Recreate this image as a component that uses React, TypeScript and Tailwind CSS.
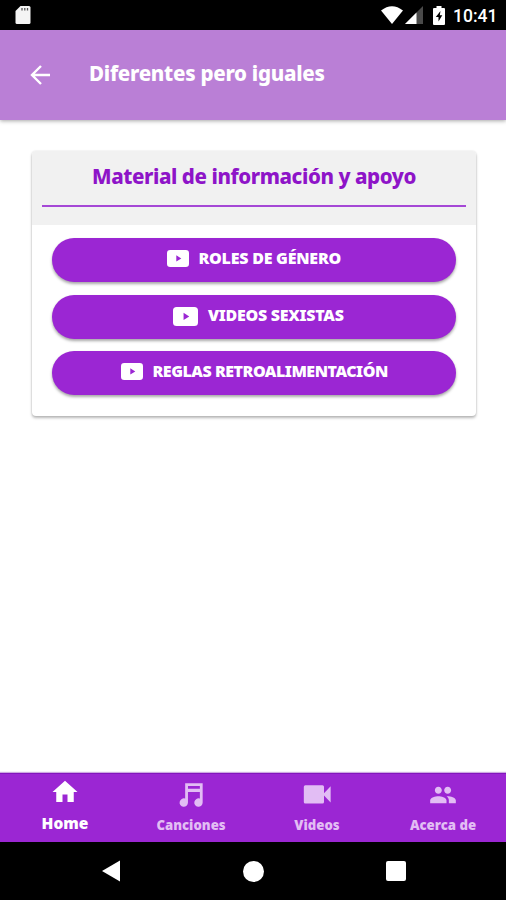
import { ReactNode } from "react";

function PlayIcon({ className }: { className: string }) {
  return (
    <svg viewBox="0 0 22 17" preserveAspectRatio="none" className={className}>
      <path
        fill="currentColor"
        fillRule="evenodd"
        d="M3.2 0h15.6Q22 0 22 3.2v10.6q0 3.2-3.2 3.2H3.2Q0 17 0 13.800V3.200Q0 0 3.200 0zM9.300 5.200v6.400l5-3.200z"
      />
    </svg>
  );
}

function StatusBar() {
  return (
    <div className="flex h-[30px] w-full items-center bg-black text-white">
      <svg viewBox="0 0 16 20" className="ml-[15px] h-5 w-4">
        <path fill="#f4f4f4" d="M5.500 1H14q1.500 0 1.500 1.500v15q0 1.500-1.500 1.500H2q-1.500 0-1.500-1.500V6z" />
        <path stroke="#555" strokeWidth="1.300" d="M7 3v2.500M9.800 3v2.500M12.500 3v2.500" />
      </svg>
      <svg viewBox="0 0 22 18" className="ml-auto h-[18px] w-[22px]">
        <path fill="#fff" d="M0 4.500Q11-4 22 4.500L11 18z" />
      </svg>
      <svg viewBox="0 0 18 18" className="ml-0.5 h-[18px] w-[18px]">
        <path fill="#4a4a4a" d="M18 0v18H0z" />
        <path fill="#fff" d="M11.500 6.500V18H0z" />
      </svg>
      <svg viewBox="0 0 12 19" className="ml-2.5 h-[19px] w-3">
        <path fill="#fff" d="M3.500 0h5v2H11q1 0 1 1v15q0 1-1 1H1q-1 0-1-1V3q0-1 1-1h2.500z" />
        <path fill="#000" d="M7.500 5 2.800 11H5.500v4.500L9.300 9.300H6.800z" />
      </svg>
      <span className="mr-[10px] ml-2 w-[43px] pt-0.5 font-[Roboto,sans-serif] text-[17.500px] leading-5 font-medium whitespace-nowrap">
        10:41
      </span>
    </div>
  );
}

const buttons = [
  {
    label: "ROLES DE GÉNERO",
    button: "",
    icon: "mb-[3px] h-[17px] w-[22px]",
    text: "w-[143px] tracking-[-0.240px]",
  },
  {
    label: "VIDEOS SEXISTAS",
    button: "pl-[9px]",
    icon: "mb-px h-[19px] w-[25px]",
    text: "w-[136px] tracking-[-0.280px]",
  },
  {
    label: "REGLAS RETROALIMENTACIÓN",
    button: "",
    icon: "mb-[3px] h-[17px] w-[22px]",
    text: "w-[235px] tracking-[-0.480px]",
  },
];

function NavItem({
  label,
  active,
  children,
}: {
  label: string;
  active?: boolean;
  children: ReactNode;
}) {
  return (
    <div
      className={
        active
          ? "flex flex-1 flex-col items-center text-white"
          : "flex flex-1 flex-col items-center pt-0.5 text-[#e2bdf4]"
      }
    >
      <svg
        viewBox="0 0 24 24"
        fill="currentColor"
        className={active ? "mt-[3px] h-[30px] w-[30px]" : "mt-[5px] h-7 w-7"}
      >
        {children}
      </svg>
      <span
        className={
          active
            ? "mt-[6px] text-[15.500px] leading-5 font-black"
            : "mt-[6px] text-[13.200px] leading-5 font-black"
        }
      >
        {label}
      </span>
    </div>
  );
}

export default function App() {
  return (
    <div className="flex h-[900px] w-[506px] flex-col overflow-hidden bg-white font-['Noto_Sans',sans-serif]">
      <StatusBar />
      <div className="z-10 flex h-[90px] items-center bg-[#ba7fd6] text-white shadow-[0_1px_4px_rgba(0,0,0,0.350)]">
        <svg viewBox="0 0 20 20" className="ml-[30px] h-5 w-5">
          <path d="M20 10H2M11 1 2 10l9 9" fill="none" stroke="currentColor" strokeWidth="2.400" />
        </svg>
        <h1 className="ml-[39px] pb-1 text-[20.500px] leading-7 font-extrabold tracking-[-0.260px] whitespace-nowrap">
          Diferentes pero iguales
        </h1>
      </div>

      <div className="flex-1">
        <div className="mt-[31px] ml-8 h-[265px] w-[444px] rounded-[4px] bg-white shadow-[0_2px_3px_rgba(0,0,0,0.280),0_0_2px_rgba(0,0,0,0.120)]">
          <div className="h-[74px] rounded-t-[4px] bg-[#f1f1f1] px-2.5 pt-2.5">
            <h2 className="flex h-11 justify-center pt-px text-[20.500px] leading-7 font-extrabold tracking-[-0.420px] whitespace-nowrap text-[#8e14c8]">
              Material de información y apoyo
            </h2>
            <div className="h-[1.500px] bg-[#a548d6]" />
          </div>
          <div className="flex flex-col gap-[12.500px] px-5 pt-[13px]">
            {buttons.map((b) => (
              <button
                key={b.label}
                className={`flex h-11 items-center justify-center gap-2.5 rounded-full bg-[#9b26d3] text-white shadow-[0_2px_3px_rgba(0,0,0,0.350)] ${b.button}`}
              >
                <PlayIcon className={b.icon} />
                <span className={`pb-1 text-left text-[16px] leading-6 font-black whitespace-nowrap ${b.text}`}>
                  {b.label}
                </span>
              </button>
            ))}
          </div>
        </div>
      </div>

      <div className="flex h-[69px] border-t border-[#8315bd] bg-[#9b26d3] pl-0.5 shadow-[0_-1px_1px_rgba(130,40,180,0.400)]">
        <NavItem label="Home" active>
          <path d="M10 20v-6h4v6h5v-8h3L12 3 2 12h3v8z" />
        </NavItem>
        <NavItem label="Canciones">
          <path
            fillRule="evenodd"
            d="M7 2h15v16.500a3.600 3.600 0 1 1-2.400-3.400V9.500H9.400v9a3.600 3.600 0 1 1-2.400-3.400zM9.400 4.300v2.400h10.200V4.300z"
          />
        </NavItem>
        <NavItem label="Videos">
          <path d="M18 10.500V5q0-1.300-1.300-1.300H2Q.7 3.700.7 5v13q0 1.300 1.300 1.300h14.700q1.300 0 1.300-1.300v-5.500l5.700 6v-14z" />
        </NavItem>
        <NavItem label="Acerca de">
          <path d="M16 11c1.660 0 2.990-1.340 2.990-3S17.660 5 16 5s-3 1.340-3 3 1.340 3 3 3zm-8 0c1.660 0 2.990-1.340 2.990-3S9.660 5 8 5 5 6.340 5 8s1.340 3 3 3zm0 2c-2.330 0-7 1.170-7 3.500V19h14v-2.500c0-2.330-4.670-3.500-7-3.500zm8 0c-.29 0-.62.020-.97.050 1.160.840 1.970 1.970 1.970 3.450V19h6v-2.500c0-2.330-4.670-3.500-7-3.500z" />
        </NavItem>
      </div>

      <div className="flex h-[58px] items-center justify-between bg-black pr-[100px] pl-[101px] text-white">
        <svg viewBox="0 0 20 22" className="h-[22px] w-5">
          <path fill="#fff" d="M19 .5v21L1 11z" />
        </svg>
        <div className="h-[21px] w-[21px] rounded-full bg-white" />
        <div className="h-5 w-5 rounded-[2px] bg-white" />
      </div>
    </div>
  );
}
